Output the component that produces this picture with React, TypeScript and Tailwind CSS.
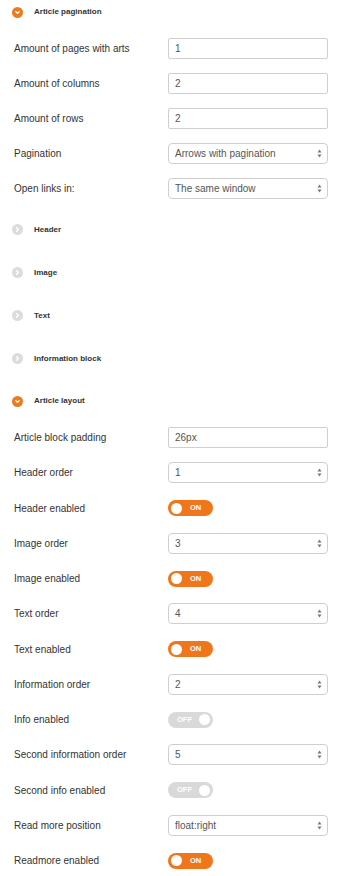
import React from 'react';

type Row =
  | { kind: 'input'; label: string; value: string }
  | { kind: 'select'; label: string; value: string }
  | { kind: 'toggle'; label: string; on: boolean };

const paginationRows: Row[] = [
  { kind: 'input', label: 'Amount of pages with arts', value: '1' },
  { kind: 'input', label: 'Amount of columns', value: '2' },
  { kind: 'input', label: 'Amount of rows', value: '2' },
  { kind: 'select', label: 'Pagination', value: 'Arrows with pagination' },
  { kind: 'select', label: 'Open links in:', value: 'The same window' },
];

const layoutRows: Row[] = [
  { kind: 'input', label: 'Article block padding', value: '26px' },
  { kind: 'select', label: 'Header order', value: '1' },
  { kind: 'toggle', label: 'Header enabled', on: true },
  { kind: 'select', label: 'Image order', value: '3' },
  { kind: 'toggle', label: 'Image enabled', on: true },
  { kind: 'select', label: 'Text order', value: '4' },
  { kind: 'toggle', label: 'Text enabled', on: true },
  { kind: 'select', label: 'Information order', value: '2' },
  { kind: 'toggle', label: 'Info enabled', on: false },
  { kind: 'select', label: 'Second information order', value: '5' },
  { kind: 'toggle', label: 'Second info enabled', on: false },
  { kind: 'select', label: 'Read more position', value: 'float:right' },
  { kind: 'toggle', label: 'Readmore enabled', on: true },
];

const collapsed = ['Header', 'Image', 'Text', 'Information block'];

function SectionIcon({ open }: { open: boolean }) {
  return (
    <span
      className={`w-[11px] h-[11px] rounded-full flex items-center justify-center flex-shrink-0 ${
        open ? 'bg-[#ec7a1e]' : 'bg-[#dcdcdc]'
      }`}
    >
      <svg width="7" height="7" viewBox="0 0 8 8">
        {open ? (
          <path d="M2 3l2 2 2-2" stroke="#fff" strokeWidth="1.6" fill="none" strokeLinecap="round" strokeLinejoin="round" />
        ) : (
          <path d="M3 2l2 2-2 2" stroke="#fff" strokeWidth="1.6" fill="none" strokeLinecap="round" strokeLinejoin="round" />
        )}
      </svg>
    </span>
  );
}

function SectionTitle({ title, open }: { title: string; open: boolean }) {
  return (
    <div className="flex items-center gap-[11px] pl-[12px] h-[14px]">
      <SectionIcon open={open} />
      <span className="text-[8px] font-bold text-[#333]">{title}</span>
    </div>
  );
}

function Toggle({ on }: { on: boolean }) {
  if (on) {
    return (
      <div className="w-[45px] h-[16px] rounded-full bg-[#f0761b] flex items-center pl-[3px] gap-[8px]">
        <span className="w-[11px] h-[11px] rounded-full bg-white" />
        <span className="text-[7.5px] font-bold text-white leading-none">ON</span>
      </div>
    );
  }
  return (
    <div className="w-[45px] h-[16px] rounded-full bg-[#d9d9d9] flex items-center justify-between pl-[9px] pr-[3px]">
      <span className="text-[7.5px] font-bold text-white leading-none">OFF</span>
      <span className="w-[11px] h-[11px] rounded-full bg-white" />
    </div>
  );
}

function Field({ row }: { row: Row }) {
  if (row.kind === 'toggle') return <Toggle on={row.on} />;
  if (row.kind === 'input') {
    return (
      <div className="w-[160px] h-[21px] border border-[#cfcfcf] rounded-[2px] bg-white flex items-center px-[6px] text-[10px] text-[#555]">
        {row.value}
      </div>
    );
  }
  return (
    <div className="w-[160px] h-[21px] border border-[#cfcfcf] rounded-[4px] bg-white flex items-center justify-between pl-[6px] pr-[5px] text-[10px] text-[#555]">
      <span>{row.value}</span>
      <svg width="5" height="9" viewBox="0 0 5 9">
        <path d="M2.5 0.5L4.5 3.5H0.5z" fill="#777" />
        <path d="M2.5 8.5L4.5 5.5H0.5z" fill="#777" />
      </svg>
    </div>
  );
}

function Rows({ rows, rowClass }: { rows: Row[]; rowClass: string }) {
  return (
    <div className="flex flex-col">
      {rows.map((r) => (
        <div key={r.label} className={`${rowClass} flex items-center`}>
          <span className="w-[168px] flex-shrink-0 pl-[14px] text-[10px] text-[#333]">{r.label}</span>
          <Field row={r} />
        </div>
      ))}
    </div>
  );
}

export default function App() {
  return (
    <div
      className="w-[340px] h-[876px] bg-white overflow-hidden"
      style={{ fontFamily: '"Liberation Sans", Arial, sans-serif' }}
    >
      <div className="pt-[5px] pb-[12px]">
        <SectionTitle title="Article pagination" open />
      </div>
      <Rows rows={paginationRows} rowClass="h-[35px]" />
      <div className="pt-[2px]">
        {collapsed.map((t) => (
          <div key={t} className="h-[43px] flex items-center">
            <SectionTitle title={t} open={false} />
          </div>
        ))}
      </div>
      <div className="pt-[14px] pb-[12px]">
        <SectionTitle title="Article layout" open />
      </div>
      <Rows rows={layoutRows} rowClass="h-[35.25px]" />
    </div>
  );
}
